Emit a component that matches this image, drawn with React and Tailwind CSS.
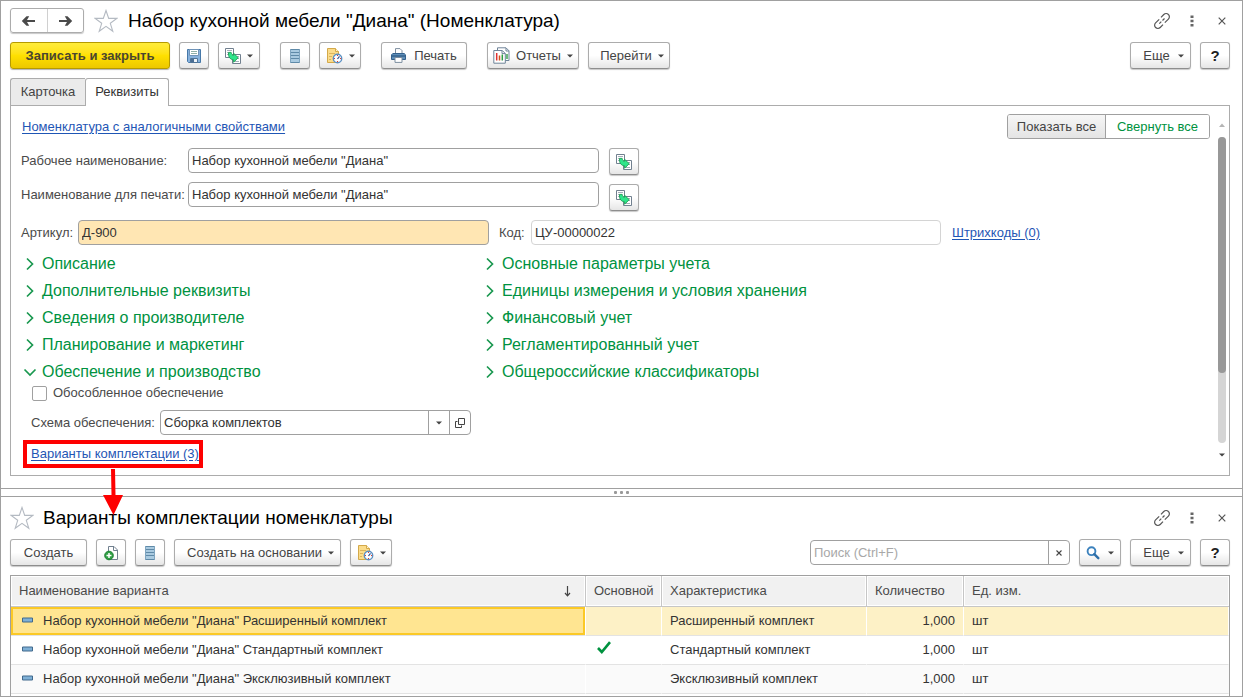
import React from "react";

const BTN =
  "flex h-[27px] shrink-0 items-center justify-center rounded-[3px] border border-[#acacac] border-b-[#8e8e8e] bg-linear-to-b from-white from-50% to-[#e6e6e6] text-[#444] shadow-[0_1px_1px_rgba(0,0,0,0.22)]";
const FIELD =
  "h-[25px] w-full min-w-0 rounded-[4px] border border-[#a0a0a0] bg-white px-[3px] text-[13px] text-[#333] outline-none";
const LINK = "text-[#1f56b5] underline underline-offset-2";

function Caret() {
  return (
    <svg width="6" height="4" viewBox="0 0 6 4" className="shrink-0" aria-hidden="true">
      <path d="M0 .5h6L3 3.5z" fill="#444" />
    </svg>
  );
}

function ArrowIcon({ flip }) {
  return (
    <svg width="15" height="12" viewBox="0 0 15 12" aria-hidden="true">
      <path
        d={
          flip
            ? "M1 5h8L6.800 1.200h2.700L14.200 6l-4.700 4.800H6.800L9 7H1z"
            : "M14 5H6l2.200-3.800H5.500L.8 6l4.700 4.800h2.700L6 7h8z"
        }
        fill="#4a4a4a"
      />
    </svg>
  );
}

function Star() {
  return (
    <svg width="24" height="24" viewBox="0 0 24 24" className="shrink-0" aria-hidden="true">
      <path
        d="M12 1.5l2.7 7.9h8.1l-6.5 4.9 2.5 8-6.8-4.9-6.8 4.9 2.5-8-6.5-4.9h8.1z"
        fill="#fff"
        stroke="#b4bac2"
        strokeWidth="1.1"
      />
    </svg>
  );
}

function SaveIcon() {
  return (
    <svg width="16" height="16" viewBox="0 0 16 16" aria-hidden="true">
      <path d="M1.500 1.500h13v13h-12l-1-1z" fill="#86b1dc" stroke="#4678a8" />
      <path d="M3.500 1.500h9v6h-9z" fill="#fff" stroke="#6f93b8" />
      <path d="M5 3.500h6M5 5.500h6" stroke="#8fb0a8" />
      <path d="M4.500 10.500h7v4h-7z" fill="#eef3f8" stroke="#4f7396" />
      <path d="M5 11h3v3H5z" fill="#4a6d93" />
    </svg>
  );
}

function CopyIcon() {
  return (
    <svg width="16" height="16" viewBox="0 0 16 16" aria-hidden="true">
      <path d="M.5.500h8v9h-8z" fill="#fff" stroke="#71808f" />
      <path d="M2 2.500h5M2 4.500h2M2 6.500h1" stroke="#a5afb9" />
      <path d="M7.500 6.500h8v9h-8z" fill="#fff" stroke="#71808f" />
      <path d="M12 8.500h2M12.500 10.500h1.500M10 13.500h4" stroke="#a5afb9" />
      <path
        d="M3.600 4.400h2.600c.2 1.700 1 2.700 2.400 3V5.300l4.600 4.400-4.600 4.600v-2.400C5.300 11.500 2.900 9 3.600 4.400z"
        fill="#2fe58a"
        stroke="#1c9c52"
        strokeWidth=".9"
      />
    </svg>
  );
}

function ListIcon() {
  return (
    <svg width="12" height="16" viewBox="0 0 12 16" aria-hidden="true">
      <path d="M1 1h10v14H1z" fill="#a9cae0" />
      <path d="M1 1.500h10M1 4.500h10M1 7.500h10M1 10.500h10M1 14.500h10" stroke="#5f8aa8" />
      <path d="M1.500 1v14M10.500 1v14" stroke="#7fa5c0" />
    </svg>
  );
}

function NoteClockIcon() {
  return (
    <svg width="17" height="17" viewBox="0 0 17 17" aria-hidden="true">
      <path d="M1.500 1.500h8l3 3v11h-11z" fill="#fbdc8a" stroke="#d3a94a" />
      <path d="M9.500 1.500v3h3" fill="#fff3cf" stroke="#d3a94a" />
      <path d="M3 6.500h6M3 9.500h3M3 12.500h2" stroke="#dcb45c" />
      <circle cx="11.500" cy="11.500" r="4.200" fill="#fff" stroke="#5b8fc2" strokeWidth="1.400" />
      <path d="M11.500 12l2-2.600" stroke="#2d4f95" strokeWidth="1.200" />
      <path d="M11 8.500h1M11 14.500h1M8 11.500h1M14 11.500h1" stroke="#e23a2e" />
    </svg>
  );
}

function PrintIcon() {
  return (
    <svg width="15" height="15" viewBox="0 0 15 15" aria-hidden="true">
      <path d="M4.500 6V.6h4.500l2 2V6" fill="#fff" stroke="#7d8e9f" />
      <path d="M1.800 5.500h11.400l1.300 1.300v4.700H.5V6.800z" fill="#5f8fba" stroke="#34618c" />
      <path d="M1 8h13" stroke="#234c75" />
      <path d="M4 9.500h7v4.900H4z" fill="#fff" stroke="#7d8e9f" />
    </svg>
  );
}

function ReportIcon() {
  return (
    <svg width="17" height="17" viewBox="0 0 17 17" aria-hidden="true">
      <path d="M4.500.8h8.500l3 3v9.700H4.500z" fill="#fff" stroke="#6f8499" />
      <path d="M13 1v3h3" fill="none" stroke="#6f8499" />
      <path d="M14 7v5" stroke="#2f9e44" strokeWidth="1.400" />
      <path d="M.8 3.500h8.500l3 3v9.700H.8z" fill="#fff" stroke="#6f8499" />
      <path d="M9 3.600v3h3.200" fill="none" stroke="#6f8499" />
      <path d="M3.700 6v7.500" stroke="#e03131" strokeWidth="1.500" />
      <path d="M6.500 8.500v5" stroke="#d0521d" strokeWidth="1.500" />
      <path d="M9.300 7.500v6" stroke="#2f9e44" strokeWidth="1.500" />
    </svg>
  );
}

function NewDocIcon() {
  return (
    <svg width="16" height="16" viewBox="0 0 16 16" aria-hidden="true">
      <path d="M5.500 1.500h5.500l3.500 3.500v9.500h-9z" fill="#fff" stroke="#71808f" />
      <path d="M10.500 1.500V5.500h4" fill="none" stroke="#71808f" />
      <circle cx="6" cy="10.500" r="4.300" fill="#2fa044" stroke="#1d7f33" />
      <path d="M6 8v5M3.500 10.500h5" stroke="#fff" strokeWidth="1.500" />
    </svg>
  );
}

function SearchIcon() {
  return (
    <svg width="14" height="14" viewBox="0 0 14 14" aria-hidden="true">
      <circle cx="5.500" cy="5.200" r="3.900" fill="#fff" stroke="#3c82bd" strokeWidth="1.900" />
      <path d="M8.300 8.200l4 4" stroke="#2f6fa8" strokeWidth="2.400" strokeLinecap="round" />
    </svg>
  );
}

function ChainIcon() {
  return (
    <svg width="18" height="18" viewBox="0 0 18 18" aria-hidden="true">
      <g fill="none" stroke="#555" strokeWidth="1.200">
        <path d="M8 5.300l2.800-2.800a3.200 3.200 0 0 1 4.600 0 3.200 3.200 0 0 1 0 4.600L11.800 10.700" />
        <path d="M10 12.700l-2.800 2.800a3.200 3.200 0 0 1-4.600 0 3.200 3.200 0 0 1 0-4.600L6.200 7.300" />
        <path d="M6.300 11.700l2-2M9.500 8.500l2-2" />
      </g>
    </svg>
  );
}

function WindowActions() {
  return (
    <div className="ml-auto flex items-center">
      <button type="button" aria-label="Ссылка" className="flex w-[18px] justify-center">
        <ChainIcon />
      </button>
      <button type="button" aria-label="Меню" className="ml-4 flex w-[10px] justify-center">
        <svg width="4" height="12" viewBox="0 0 4 12" aria-hidden="true">
          <path d="M.5.500h3v2.500h-3zM.5 4.700h3v2.500h-3zM.5 9h3v2.500h-3z" fill="#666" />
        </svg>
      </button>
      <button type="button" aria-label="Закрыть" className="ml-5 mr-1 flex w-[9px] justify-center">
        <svg width="8" height="8" viewBox="0 0 8 8" aria-hidden="true">
          <path d="M.7.7l6.600 6.600M7.300.7L.7 7.300" stroke="#555" strokeWidth="1.200" />
        </svg>
      </button>
    </div>
  );
}

function MoreAndHelp() {
  return (
    <>
      <button type="button" className={`${BTN} w-[61px] gap-2 pl-[6px]`}>
        Еще <Caret />
      </button>
      <button type="button" className={`${BTN} w-[30px] text-[15px] font-bold !text-[#222]`}>
        ?
      </button>
    </>
  );
}

function Section({ title, open }) {
  return (
    <button
      type="button"
      aria-expanded={!!open}
      className="flex h-[27px] items-center gap-[5px] text-left text-[16px] text-[#00923f]"
    >
      <svg width="14" height="14" viewBox="0 0 14 14" className="shrink-0" aria-hidden="true">
        <path
          d={open ? "M1.500 4.500L7 10l5.500-5.500" : "M4 1.500L9.500 7 4 12.500"}
          fill="none"
          stroke="#1a9850"
          strokeWidth="1.700"
        />
      </svg>
      {title}
    </button>
  );
}

function CopyButton() {
  return (
    <button type="button" aria-label="Заполнить" className={`${BTN} w-[30px]`}>
      <CopyIcon />
    </button>
  );
}

const LEFT = [
  "Описание",
  "Дополнительные реквизиты",
  "Сведения о производителе",
  "Планирование и маркетинг",
];
const RIGHT = [
  "Основные параметры учета",
  "Единицы измерения и условия хранения",
  "Финансовый учет",
  "Регламентированный учет",
  "Общероссийские классификаторы",
];
const ROWS = [
  { kind: "Расширенный комплект", main: false },
  { kind: "Стандартный комплект", main: true },
  { kind: "Эксклюзивный комплект", main: false },
];

function ItemForm() {
  return (
    <section className="flex flex-col gap-[9px] pb-3 pl-[9px] pr-3 pt-[7px]">
      <header className="flex h-[25px] items-center">
        <div className="flex h-[25px] w-[74px] rounded-[3px] border border-[#acacac] shadow-[0_1px_1px_rgba(0,0,0,0.22)]">
          <button type="button" aria-label="Назад" className="flex flex-1 items-center justify-center border-r border-[#d0d0d0]">
            <ArrowIcon />
          </button>
          <button type="button" aria-label="Вперед" className="flex flex-1 items-center justify-center">
            <ArrowIcon flip />
          </button>
        </div>
        <button type="button" aria-label="В избранное" className="ml-[10px]">
          <Star />
        </button>
        <h1 className="ml-[10px] text-[19px] leading-6 text-black">
          Набор кухонной мебели "Диана" (Номенклатура)
        </h1>
        <WindowActions />
      </header>

      <div className="flex items-center gap-[9px]">
        <button
          type="button"
          className="h-[27px] w-[160px] rounded-[3px] border border-[#b59a00] bg-linear-to-b from-[#ffec3a] via-[#ffe000] to-[#ecc800] text-[13px] font-bold text-[#4a4630] shadow-[0_1px_1px_rgba(0,0,0,0.3)]"
        >
          Записать и закрыть
        </button>
        <button type="button" aria-label="Записать" className={`${BTN} w-[30px]`}>
          <SaveIcon />
        </button>
        <button type="button" aria-label="Скопировать" className={`${BTN} w-[42px] gap-[6px]`}>
          <CopyIcon />
          <Caret />
        </button>
        <button type="button" aria-label="Список" className={`${BTN} ml-[11px] w-[30px]`}>
          <ListIcon />
        </button>
        <button type="button" aria-label="Напоминание" className={`${BTN} w-[42px] gap-[6px]`}>
          <NoteClockIcon />
          <Caret />
        </button>
        <button type="button" className={`${BTN} ml-[11px] w-[86px] gap-2`}>
          <PrintIcon />
          Печать
        </button>
        <button type="button" className={`${BTN} ml-[11px] w-[92px] gap-[6px]`}>
          <ReportIcon />
          Отчеты
          <Caret />
        </button>
        <button type="button" className={`${BTN} w-[82px] gap-[6px] pl-[6px]`}>
          Перейти <Caret />
        </button>
        <div className="ml-auto flex gap-[9px]">
          <MoreAndHelp />
        </div>
      </div>

      <div>
        <div role="tablist" className="flex">
          <button
            type="button"
            role="tab"
            aria-selected="false"
            className="h-[27px] w-[75px] rounded-tl-[3px] border border-b-0 border-r-0 border-[#acacac] bg-[#ebebeb] text-[#444]"
          >
            Карточка
          </button>
          <button
            type="button"
            role="tab"
            aria-selected="true"
            className="-mb-px h-7 w-[84px] rounded-t-[3px] border border-b-0 border-[#acacac] bg-white pb-[2px] text-[#333]"
          >
            Реквизиты
          </button>
        </div>

        <div className="flex border border-[#acacac]">
          <div className="flex min-w-0 flex-1 flex-col pb-[7px] pl-[10px] pt-2">
            <div className="flex items-center justify-between">
              <a href="#similar" className={`${LINK} ml-px`}>
                Номенклатура с аналогичными свойствами
              </a>
              <div className="mr-[5px] flex h-[25px] overflow-hidden rounded-[3px] border border-[#a0a0a0]">
                <button type="button" className="w-[98px] border-r border-[#a0a0a0] bg-linear-to-b from-[#f6f6f6] to-[#e4e4e4] text-[#444]">
                  Показать все
                </button>
                <button type="button" className="w-[103px] bg-white text-[#00923f]">
                  Свернуть все
                </button>
              </div>
            </div>

            <div className="mt-[9px] flex gap-[10px]">
              <div className="grid max-w-[578px] flex-1 grid-cols-[167px_1fr] items-center gap-y-[9px] self-start">
                <label htmlFor="workName">Рабочее наименование:</label>
                <input id="workName" className={FIELD} defaultValue={'Набор кухонной мебели "Диана"'} />
                <label htmlFor="printName">Наименование для печати:</label>
                <input id="printName" className={FIELD} defaultValue={'Набор кухонной мебели "Диана"'} />
              </div>
              <div className="flex flex-col gap-[9px]">
                <CopyButton />
                <CopyButton />
              </div>
            </div>

            <div className="mt-[9px] flex items-center">
              <label htmlFor="article" className="w-[57px] shrink-0">Артикул:</label>
              <div className="max-w-[411px] flex-1">
                <input id="article" className={`${FIELD} !bg-[#ffe6b3]`} defaultValue="Д-900" />
              </div>
              <label htmlFor="code" className="ml-[10px] w-[32px] shrink-0">Код:</label>
              <div className="max-w-[410px] flex-1">
                <input id="code" readOnly className={`${FIELD} !border-[#d4d4d4]`} defaultValue="ЦУ-00000022" />
              </div>
              <a href="#barcodes" className={`${LINK} ml-[11px]`}>
                Штрихкоды (0)
              </a>
            </div>

            <div className="mt-[5px] grid grid-cols-[460px_1fr]">
              <div className="ml-[2px] flex flex-col">
                {LEFT.map((t) => (
                  <Section key={t} title={t} />
                ))}
                <Section title="Обеспечение и производство" open />
              </div>
              <div className="ml-[2px] flex flex-col">
                {RIGHT.map((t) => (
                  <Section key={t} title={t} />
                ))}
              </div>
            </div>

            <label className="ml-[11px] flex h-4 items-center gap-[6px]">
              <input type="checkbox" className="size-[15px] appearance-none rounded-[2px] border border-[#a0a0a0] bg-white" />
              Обособленное обеспечение
            </label>

            <div className="ml-[10px] mt-[9px] flex items-center">
              <label htmlFor="scheme" className="w-[129px] shrink-0">Схема обеспечения:</label>
              <div className="flex h-[25px] w-[311px] overflow-hidden rounded-[4px] border border-[#a0a0a0] bg-white">
                <div className="grid flex-1">
                  <select id="scheme" className="col-start-1 row-start-1 appearance-none px-[3px] text-[#333] outline-none">
                    <option>Сборка комплектов</option>
                  </select>
                  <span className="pointer-events-none col-start-1 row-start-1 flex w-[21px] items-center justify-center justify-self-end border-l border-[#a0a0a0]">
                    <Caret />
                  </span>
                </div>
                <button type="button" aria-label="Открыть" className="flex w-[21px] items-center justify-center border-l border-[#a0a0a0]">
                  <svg width="10" height="10" viewBox="0 0 10 10" aria-hidden="true">
                    <path d="M3.500.500h6v6h-6z" fill="none" stroke="#444" />
                    <path d="M2.500 3.500h-2v6h6v-2" fill="none" stroke="#444" />
                  </svg>
                </button>
              </div>
            </div>

            <div className="relative ml-[2px] mt-[5px] flex h-7 w-[180px] items-center border-4 border-[#fe0000] pl-1">
              <a href="#variants" className={`${LINK} whitespace-nowrap`}>
                Варианты комплектации (3)
              </a>
              <svg
                width="20"
                height="46"
                viewBox="0 0 20 46"
                className="pointer-events-none absolute left-[76px] top-[25px]"
                aria-hidden="true"
              >
                <path d="M8 0h4l.500 26H20L10.500 46 0 26h8.500z" fill="#fe0000" />
              </svg>
            </div>
          </div>

          <div className="flex w-[14px] shrink-0 flex-col items-center pb-[18px] pt-[17px]" aria-hidden="true">
            <svg width="6" height="4" viewBox="0 0 6 4">
              <path d="M0 4h6L3 .500z" fill="#b5b5b5" />
            </svg>
            <div className="my-[10px] w-2 flex-1 rounded-full bg-[#d5d5d5]">
              <div className="h-[77%] rounded-full bg-[#989898]" />
            </div>
            <Caret />
          </div>
        </div>
      </div>
    </section>
  );
}

const TH =
  "border-b border-r border-[#c6c6c6] bg-[#f1f1f1] px-2 text-left font-normal text-[#4a4a4a] shadow-[inset_0_0_0_1px_#fff] last:border-r-0";

function VariantsList() {
  return (
    <section className="flex flex-1 flex-col gap-[9px] pl-[9px] pr-3 pt-2">
      <header className="flex h-[25px] items-center">
        <button type="button" aria-label="В избранное">
          <Star />
        </button>
        <h2 className="ml-[9px] text-[19px] leading-6 text-black">Варианты комплектации номенклатуры</h2>
        <WindowActions />
      </header>

      <div className="flex items-center gap-[9px]">
        <button type="button" className={`${BTN} w-[77px]`}>
          Создать
        </button>
        <button type="button" aria-label="Добавить" className={`${BTN} w-[30px]`}>
          <NewDocIcon />
        </button>
        <button type="button" aria-label="Список" className={`${BTN} w-[30px]`}>
          <ListIcon />
        </button>
        <button type="button" className={`${BTN} w-[167px] gap-[6px] pl-[6px]`}>
          Создать на основании <Caret />
        </button>
        <button type="button" aria-label="Напоминание" className={`${BTN} w-[42px] gap-[6px]`}>
          <NoteClockIcon />
          <Caret />
        </button>
        <div className="ml-auto flex items-center gap-[9px]">
          <div className="flex h-[25px] w-[260px] overflow-hidden rounded-[4px] border border-[#a0a0a0] bg-white">
            <input
              type="text"
              aria-label="Поиск"
              placeholder="Поиск (Ctrl+F)"
              className="min-w-0 flex-1 px-[3px] outline-none placeholder:text-[#a8a8a8]"
            />
            <button type="button" aria-label="Очистить" className="flex w-[21px] items-center justify-center border-l border-[#a0a0a0]">
              <svg width="6" height="6" viewBox="0 0 6 6" aria-hidden="true">
                <path d="M.5.500l5 5M5.500.500l-5 5" stroke="#444" strokeWidth="1.100" />
              </svg>
            </button>
          </div>
          <button type="button" aria-label="Найти" className={`${BTN} w-[42px] gap-[8px]`}>
            <SearchIcon />
            <Caret />
          </button>
          <MoreAndHelp />
        </div>
      </div>

      <div className="flex-1 border border-b-0 border-[#a0a0a0]">
        <table className="w-full table-fixed border-separate border-spacing-0">
          <colgroup>
            <col className="w-[575px]" />
            <col className="w-[76px]" />
            <col className="w-[205px]" />
            <col className="w-[97px]" />
            <col />
          </colgroup>
          <thead>
            <tr className="h-[31px]">
              <th className={TH}>
                <span className="flex items-center justify-between pr-[6px]">
                  Наименование варианта
                  <svg width="7" height="11" viewBox="0 0 7 11" aria-hidden="true">
                    <path d="M3.500 0v9M1 7l2.500 2.800L6 7" fill="none" stroke="#444" strokeWidth="1.200" />
                  </svg>
                </span>
              </th>
              <th className={TH}>Основной</th>
              <th className={TH}>Характеристика</th>
              <th className={TH}>Количество</th>
              <th className={TH}>Ед. изм.</th>
            </tr>
          </thead>
          <tbody className="text-[#333]">
            {ROWS.map((r, i) => {
              const bg = i === 0 ? "bg-[#fdf1c6]" : i === 2 ? "bg-[#fafafa]" : "bg-white";
              const gap = i === 0 ? "border-r border-r-white" : "border-r border-r-transparent";
              const cell = `border-b border-b-[#e3e3e3] px-2 ${bg} ${gap}`;
              return (
                <tr key={r.kind} className="h-[29px]">
                  <td className={`border-b border-b-[#e3e3e3] p-0 ${gap}`}>
                    <div
                      className={
                        i === 0
                          ? "flex h-[28px] items-center border-2 border-[#fbc926] bg-[#ffe591] pl-[9px]"
                          : `flex h-[28px] items-center pl-[11px] ${bg}`
                      }
                    >
                      <svg width="11" height="6" viewBox="0 0 11 6" className="mb-[2px] mr-[10px] shrink-0" aria-hidden="true">
                        <path d="M.5 1h10v4H.5z" fill="#7fb0d6" stroke="#41698c" />
                      </svg>
                      Набор кухонной мебели "Диана" {r.kind}
                    </div>
                  </td>
                  <td className={cell}>
                    {r.main && (
                      <svg width="14" height="13" viewBox="0 0 14 13" className="mb-[5px] ml-[3px]" role="img" aria-label="Да">
                        <path d="M1 7l3.800 4L13 1.200" fill="none" stroke="#00923f" strokeWidth="2.600" />
                      </svg>
                    )}
                  </td>
                  <td className={cell}>{r.kind}</td>
                  <td className={`${cell} text-right`}>1,000</td>
                  <td className={cell}>шт</td>
                </tr>
              );
            })}
          </tbody>
        </table>
      </div>
    </section>
  );
}

export default function App() {
  return (
    <main className="flex min-h-screen flex-col border border-[#a0a0a0] bg-white font-['Liberation_Sans',Arial,sans-serif] text-[13px] leading-4 text-[#4a4a4a]">
      <ItemForm />
      <div className="flex h-[9px] items-center justify-center gap-[3px] border-y border-[#a0a0a0]" role="separator">
        <i className="size-[3px] rounded-[1px] bg-[#999]" />
        <i className="size-[3px] rounded-[1px] bg-[#999]" />
        <i className="size-[3px] rounded-[1px] bg-[#999]" />
      </div>
      <VariantsList />
    </main>
  );
}
